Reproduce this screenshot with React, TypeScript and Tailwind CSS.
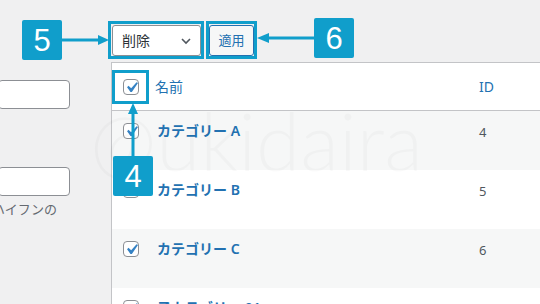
import React from "react";

const rows = [
  { name: "カテゴリー A", id: "4", alt: true },
  { name: "カテゴリー B", id: "5", alt: false },
  { name: "カテゴリー C", id: "6", alt: true },
  { name: "子カテゴリー 01", id: "8", alt: false },
];

function CheckBox() {
  return (
    <span className="relative block w-4 h-4 rounded-[4px] border border-[#8c8f94] bg-white">
      <svg
        className="absolute -left-[3px] -top-[3px] w-[21px] h-[21px]"
        viewBox="0 0 20 20"
      >
        <path
          fill="#3582c4"
          d="M14.83 4.89l1.34.94-5.81 8.38H9.02L5.78 9.67l1.34-1.25 2.57 2.4z"
        />
      </svg>
    </span>
  );
}

function Badge({ n, className }: { n: string; className: string }) {
  return (
    <div
      className={`absolute w-10 h-10 rounded-[2px] bg-[#109ecb] text-white flex items-center justify-center text-[31px] leading-none font-['Liberation_Sans',Arial,sans-serif] ${className}`}
    >
      {n}
    </div>
  );
}

export default function App() {
  return (
    <div className="relative w-[540px] h-[304px] overflow-hidden bg-[#f0f0f1] flex font-['Noto_Sans','Noto_Sans_CJK_JP',sans-serif]">
      {/* left form column */}
      <aside className="w-[111px] shrink-0 flex flex-col">
        <div className="mt-[80px] -ml-[2px] w-[72px] h-[29px] rounded-[4px] border border-[#8c8f94] bg-white" />
        <div className="mt-[58px] -ml-[2px] w-[72px] h-[29px] rounded-[4px] border border-[#8c8f94] bg-white" />
        <p className="mt-[3px] -ml-[8px] text-[13px] leading-[20px] text-[#646970] whitespace-nowrap">
          ハイフンの
        </p>
      </aside>

      {/* list table column */}
      <main className="flex-1 flex flex-col">
        <div className="h-[62px] shrink-0 flex items-start gap-2 pt-[25px] pl-[1px]">
          <div className="w-[89px] h-[31px] rounded-[3px] border border-[#8c8f94] bg-white flex items-center justify-between pl-[9px] pr-[8px] text-[14px] text-[#2c3338]">
            <span>削除</span>
            <svg className="w-3 h-3" viewBox="0 0 12 12">
              <polyline
                points="2,4 6,8 10,4"
                fill="none"
                stroke="#50575e"
                strokeWidth="1.6"
              />
            </svg>
          </div>
          <div className="w-[45px] h-[31px] rounded-[3px] border border-[#2271b1] bg-[#f6f7f7] flex items-center justify-center text-[13px] text-[#2271b1]">
            適用
          </div>
        </div>

        <div className="flex-1 border-l border-t border-[#c3c4c7] bg-white">
          <div className="h-[48px] flex items-center border-b border-[#c3c4c7] text-[14px] text-[#2271b1]">
            <div className="w-[35px] pl-[11px]">
              <CheckBox />
            </div>
            <div className="w-[322px] pl-[8px]">名前</div>
            <div className="pl-[10px]">ID</div>
          </div>
          {rows.map((r) => (
            <div
              key={r.id}
              className={`h-[59px] flex items-start ${r.alt ? "bg-[#f6f7f7]" : "bg-white"}`}
            >
              <div className="w-[35px] pl-[11px] pt-[12px]">
                <CheckBox />
              </div>
              <div className="w-[322px] pl-[10px] pt-[10px] text-[14px] leading-[20px] font-semibold text-[#2271b1]">
                {r.name}
              </div>
              <div className="pl-[10px] pt-[11px] text-[13px] leading-[20px] text-[#50575e]">
                {r.id}
              </div>
            </div>
          ))}
        </div>
      </main>

      {/* watermark */}
      <div className="absolute left-[90px] top-[100px] text-[80px] leading-none font-light font-['Lato',sans-serif] text-black/[0.025] pointer-events-none whitespace-nowrap">
        @ukidaira
      </div>

      {/* callout outlines */}
      <div className="absolute left-[108px] top-[21px] w-[96px] h-[38px] border-[3px] border-[#109ecb]" />
      <div className="absolute left-[206px] top-[21px] w-[51px] h-[38px] border-[3px] border-[#109ecb]" />
      <div className="absolute left-[112px] top-[70px] w-[37px] h-[34px] border-[3px] border-[#109ecb]" />

      {/* callout arrows */}
      <svg className="absolute left-0 top-0 w-[540px] h-[304px] pointer-events-none" viewBox="0 0 540 304">
        <line x1="62" y1="40" x2="100" y2="40" stroke="#109ecb" strokeWidth="3" />
        <polygon points="109,40 98,35 98,45" fill="#109ecb" />
        <line x1="268" y1="38" x2="314" y2="38" stroke="#109ecb" strokeWidth="3" />
        <polygon points="257,38 269,33 269,43" fill="#109ecb" />
        <line x1="133" y1="112" x2="133" y2="156" stroke="#109ecb" strokeWidth="3" />
        <polygon points="133,103 128,114 138,114" fill="#109ecb" />
      </svg>

      <Badge n="5" className="left-[22px] top-[20px]" />
      <Badge n="6" className="left-[314px] top-[18px]" />
      <Badge n="4" className="left-[113px] top-[156px]" />
    </div>
  );
}
